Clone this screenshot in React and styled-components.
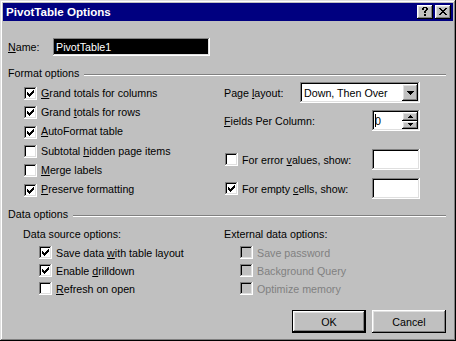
import React from 'react';
import styled, { createGlobalStyle } from 'styled-components';

const Global = createGlobalStyle`
  html, body { margin: 0; padding: 0; background: #c0c0c0; }
  body { font-family: "Liberation Sans", Arial, sans-serif; font-size: 10.7px; color: #000; }
  * { box-sizing: border-box; }
`;

const raised = 'inset -1px -1px #000, inset 1px 1px #fff, inset -2px -2px #808080, inset 2px 2px #dfdfdf';
const sunken = 'inset -1px -1px #fff, inset 1px 1px #808080, inset -2px -2px #dfdfdf, inset 2px 2px #000';

const Window = styled.div`
  width: 456px;
  height: 341px;
  background: #c0c0c0;
  padding: 3px;
  display: flex;
  flex-direction: column;
  box-shadow: inset -1px -1px #000, inset 1px 1px #dfdfdf, inset -2px -2px #808080, inset 2px 2px #fff;
`;

const TitleBar = styled.div`
  height: 18px;
  background: #000080;
  display: flex;
  align-items: center;
  padding: 0 2px 0 3px;
`;

const Title = styled.div`
  flex: 1;
  color: #fff;
  font-weight: bold;
  font-size: 11.6px;
  line-height: 18px;
`;

const TitleButtons = styled.div`
  display: flex;
  gap: 2px;
`;

const TitleButton = styled.div`
  width: 16px;
  height: 14px;
  background: #c0c0c0;
  box-shadow: ${raised};
  display: flex;
  align-items: center;
  justify-content: center;
  padding-bottom: 1px;
`;

const Body = styled.div`
  flex: 1;
  display: flex;
  flex-direction: column;
  padding: 0 7px 5px 5px;
`;

const NameRow = styled.div`
  margin-top: 17px;
  height: 18px;
  display: flex;
  align-items: center;
`;

const Label = styled.span`
  display: inline-block;
  width: ${p => (p.$w ? `${p.$w}px` : 'auto')};
  color: ${p => (p.$disabled ? '#808080' : '#000')};
  padding-bottom: ${p => (p.$lift ? 2 : 0)}px;
  white-space: nowrap;
`;

const Acc = styled.span`
  text-decoration: underline;
  text-underline-offset: 1px;
`;

const NameInput = styled.div`
  width: 157px;
  height: 18px;
  background: #000;
  color: #fff;
  box-shadow: ${sunken};
  padding-left: 3px;
  display: flex;
  align-items: center;
`;

const SectionHeader = styled.div`
  margin-top: ${p => p.$mt}px;
  height: 13px;
  display: flex;
  align-items: center;
  gap: 5px;
`;

const Groove = styled.div`
  flex: 1;
  height: 2px;
  margin-top: 4px;
  border-top: 1px solid #808080;
  border-bottom: 1px solid #fff;
`;

const Columns = styled.div`
  margin-top: ${p => p.$mt}px;
  display: flex;
`;

const LeftCol = styled.div`
  width: 216px;
  display: flex;
  flex-direction: column;
  padding-left: ${p => p.$pl}px;
  padding-top: ${p => p.$pt || 0}px;
`;

const RightCol = styled.div`
  width: 196px;
  display: flex;
  flex-direction: column;
`;

const SubList = styled.div`
  display: flex;
  flex-direction: column;
  padding-left: 16px;
  margin-top: ${p => p.$mt}px;
`;

const CheckRow = styled.div`
  height: ${p => p.$h}px;
  display: flex;
  align-items: center;
  gap: 4px;
`;

const Box = styled.div`
  width: 13px;
  height: 13px;
  flex: none;
  background: ${p => (p.$disabled ? '#c0c0c0' : '#fff')};
  box-shadow: ${sunken};
  display: flex;
  align-items: center;
  justify-content: center;
`;

const FieldRow = styled.div`
  height: ${p => p.$h}px;
  margin-top: ${p => p.$mt || 0}px;
  display: flex;
  align-items: center;
  justify-content: ${p => (p.$spread ? 'space-between' : 'flex-start')};
  padding-left: ${p => p.$pl || 0}px;
`;

const Spacer = styled.div`
  flex: 1;
`;

const Select = styled.div`
  width: 120px;
  height: 21px;
  background: #fff;
  box-shadow: ${sunken};
  display: flex;
  align-items: center;
  padding: 2px;
`;

const SelectText = styled.div`
  flex: 1;
  padding-left: 2px;
`;

const ArrowButton = styled.div`
  width: 16px;
  height: 17px;
  background: #c0c0c0;
  box-shadow: ${raised};
  display: flex;
  align-items: center;
  justify-content: center;
`;

const Spinner = styled.div`
  width: 48px;
  height: 21px;
  background: #fff;
  box-shadow: ${sunken};
  display: flex;
  align-items: center;
  padding: 2px;
`;

const SpinText = styled.div`
  flex: 1;
  display: flex;
  align-items: center;
  padding-left: 1px;
`;

const Caret = styled.span`
  width: 1px;
  height: 13px;
  background: #000;
  margin-right: -1px;
`;

const SpinButtons = styled.div`
  width: 16px;
  height: 17px;
  display: flex;
  flex-direction: column;
`;

const SpinButton = styled.div`
  flex: 1;
  background: #c0c0c0;
  box-shadow: ${raised};
  display: flex;
  align-items: center;
  justify-content: center;
`;

const SmallInput = styled.div`
  width: 48px;
  height: 21px;
  background: #fff;
  box-shadow: ${sunken};
`;

const PlainLabel = styled.div`
  height: 13px;
  display: flex;
  align-items: center;
`;

const ButtonRow = styled.div`
  margin-top: auto;
  display: flex;
  justify-content: flex-end;
  gap: 6px;
`;

const PushButton = styled.div`
  width: 74px;
  height: 23px;
  background: #c0c0c0;
  display: flex;
  align-items: center;
  justify-content: center;
  box-shadow: ${p =>
    p.$default
      ? 'inset 0 0 0 1px #000, inset -2px -2px #000, inset 2px 2px #fff, inset -3px -3px #808080, inset 3px 3px #dfdfdf'
      : raised};
`;

const Pix = ({ w, h, d, color = '#000' }) => (
  <svg width={w} height={h} viewBox={`0 0 ${w} ${h}`} shapeRendering="crispEdges">
    <path d={d} fill={color} />
  </svg>
);

const CHECK = 'M0 2h1v3h-1z M1 3h1v3h-1z M2 4h1v3h-1z M3 3h1v3h-1z M4 2h1v3h-1z M5 1h1v3h-1z M6 0h1v3h-1z';
const CLOSE = 'M0 0h2v1h-2z M6 0h2v1h-2z M1 1h2v1h-2z M5 1h2v1h-2z M2 2h4v1h-4z M3 3h2v1h-2z M2 4h4v1h-4z M1 5h2v1h-2z M5 5h2v1h-2z M0 6h2v1h-2z M6 6h2v1h-2z';
const HELP = 'M1 0h4v1h-4z M0 1h2v2h-2z M4 1h2v2h-2z M3 3h2v1h-2z M2 4h2v2h-2z M2 7h2v2h-2z';
const DOWN = 'M0 0h7v1h-7z M1 1h5v1h-5z M2 2h3v1h-3z M3 3h1v1h-1z';
const SPIN_UP = 'M2 0h1v1h-1z M1 1h3v1h-3z M0 2h5v1h-5z';
const SPIN_DOWN = 'M0 0h5v1h-5z M1 1h3v1h-3z M2 2h1v1h-1z';

const Checkbox = ({ checked, disabled, h = 19, lift, children }) => (
  <CheckRow $h={h}>
    <Box $disabled={disabled}>{checked && <Pix w={7} h={7} d={CHECK} />}</Box>
    <Label $disabled={disabled} $lift={lift}>{children}</Label>
  </CheckRow>
);

export default function App() {
  return (
    <>
      <Global />
      <Window>
        <TitleBar>
          <Title>PivotTable Options</Title>
          <TitleButtons>
            <TitleButton>
              <Pix w={6} h={9} d={HELP} />
            </TitleButton>
            <TitleButton>
              <Pix w={8} h={7} d={CLOSE} />
            </TitleButton>
          </TitleButtons>
        </TitleBar>
        <Body>
          <NameRow>
            <Label $w={45}>
              <Acc>N</Acc>ame:
            </Label>
            <NameInput>PivotTable1</NameInput>
          </NameRow>

          <SectionHeader $mt={10}>
            <span>Format options</span>
            <Groove />
          </SectionHeader>

          <Columns $mt={3}>
            <LeftCol $pl={16} $pt={2}>
              <Checkbox h={19.3} lift checked>
                <Acc>G</Acc>rand totals for columns
              </Checkbox>
              <Checkbox h={19.3} lift checked>
                Grand <Acc>t</Acc>otals for rows
              </Checkbox>
              <Checkbox h={19.3} lift checked>
                <Acc>A</Acc>utoFormat table
              </Checkbox>
              <Checkbox h={19.3} lift>
                Subtotal <Acc>h</Acc>idden page items
              </Checkbox>
              <Checkbox h={19.3} lift>
                <Acc>M</Acc>erge labels
              </Checkbox>
              <Checkbox h={19.3} lift checked>
                <Acc>P</Acc>reserve formatting
              </Checkbox>
            </LeftCol>
            <RightCol>
              <FieldRow $h={21}>
                <Label $w={76}>
                  Page <Acc>l</Acc>ayout:
                </Label>
                <Select>
                  <SelectText>Down, Then Over</SelectText>
                  <ArrowButton>
                    <Pix w={7} h={4} d={DOWN} />
                  </ArrowButton>
                </Select>
              </FieldRow>
              <FieldRow $h={21} $mt={7} $spread>
                <Label>
                  <Acc>F</Acc>ields Per Column:
                </Label>
                <Spinner>
                  <SpinText>
                    <Caret />0
                  </SpinText>
                  <SpinButtons>
                    <SpinButton>
                      <Pix w={5} h={3} d={SPIN_UP} />
                    </SpinButton>
                    <SpinButton>
                      <Pix w={5} h={3} d={SPIN_DOWN} />
                    </SpinButton>
                  </SpinButtons>
                </Spinner>
              </FieldRow>
              <FieldRow $h={21} $mt={18} $pl={1}>
                <Checkbox h={21}>
                  For error <Acc>v</Acc>alues, show:
                </Checkbox>
                <Spacer />
                <SmallInput />
              </FieldRow>
              <FieldRow $h={21} $mt={8} $pl={1}>
                <Checkbox h={21} checked>
                  For empty <Acc>c</Acc>ells, show:
                </Checkbox>
                <Spacer />
                <SmallInput />
              </FieldRow>
            </RightCol>
          </Columns>

          <SectionHeader $mt={8}>
            <span>Data options</span>
            <Groove />
          </SectionHeader>

          <Columns $mt={7}>
            <LeftCol $pl={15}>
              <PlainLabel>Data source options:</PlainLabel>
              <SubList $mt={3}>
                <Checkbox h={18} checked>
                  Save data <Acc>w</Acc>ith table layout
                </Checkbox>
                <Checkbox h={18} checked>
                  Enable <Acc>d</Acc>rilldown
                </Checkbox>
                <Checkbox h={18}>
                  <Acc>R</Acc>efresh on open
                </Checkbox>
              </SubList>
            </LeftCol>
            <RightCol>
              <PlainLabel>External data options:</PlainLabel>
              <SubList $mt={3}>
                <Checkbox h={18} disabled>
                  Save password
                </Checkbox>
                <Checkbox h={18} disabled>
                  Background Query
                </Checkbox>
                <Checkbox h={18} disabled>
                  Optimize memory
                </Checkbox>
              </SubList>
            </RightCol>
          </Columns>

          <ButtonRow>
            <PushButton $default>OK</PushButton>
            <PushButton>Cancel</PushButton>
          </ButtonRow>
        </Body>
      </Window>
    </>
  );
}
